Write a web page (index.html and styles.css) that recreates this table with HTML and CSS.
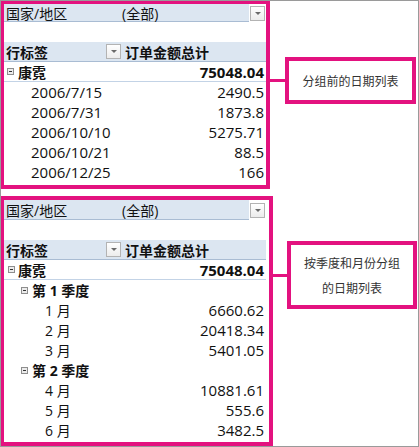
FILE: index.html
```html
<!DOCTYPE html>
<html lang="zh-CN">
<head>
<meta charset="utf-8">
<link rel="stylesheet" href="styles.css">
</head>
<body>
<div class="frame">
  <section class="group g1">
    <div class="pivot p1">
      <div class="filter"><span class="fl">国家/地区</span><span class="fv">(全部)</span><span class="btn"></span></div>
      <div class="spacer"></div>
      <div class="hdr"><span class="hl">行标签</span><span class="btn"></span><span class="hv">订单金额总计</span></div>
      <div class="row total"><span class="exp"></span><span class="lbl">康霓</span><span class="val">75048.04</span></div>
      <div class="row date"><span class="lbl">2006/7/15</span><span class="val">2490.5</span></div>
      <div class="row date"><span class="lbl">2006/7/31</span><span class="val">1873.8</span></div>
      <div class="row date"><span class="lbl">2006/10/10</span><span class="val">5275.71</span></div>
      <div class="row date"><span class="lbl">2006/10/21</span><span class="val">88.5</span></div>
      <div class="row date"><span class="lbl">2006/12/25</span><span class="val">166</span></div>
    </div>
    <div class="callout-wrap c1"><span class="link"></span><div class="callout">分组前的日期列表</div></div>
  </section>
  <section class="group g2">
    <div class="pivot p2">
      <div class="filter"><span class="fl">国家/地区</span><span class="fv">(全部)</span><span class="btn"></span></div>
      <div class="spacer"></div>
      <div class="hdr"><span class="hl">行标签</span><span class="btn"></span><span class="hv">订单金额总计</span></div>
      <div class="row total"><span class="exp"></span><span class="lbl">康霓</span><span class="val">75048.04</span></div>
      <div class="row quarter"><span class="exp"></span><span class="lbl">第 1 季度</span></div>
      <div class="row month"><span class="lbl">1 月</span><span class="val">6660.62</span></div>
      <div class="row month"><span class="lbl">2 月</span><span class="val">20418.34</span></div>
      <div class="row month"><span class="lbl">3 月</span><span class="val">5401.05</span></div>
      <div class="row quarter"><span class="exp"></span><span class="lbl">第 2 季度</span></div>
      <div class="row month"><span class="lbl">4 月</span><span class="val">10881.61</span></div>
      <div class="row month"><span class="lbl">5 月</span><span class="val">555.6</span></div>
      <div class="row month"><span class="lbl">6 月</span><span class="val">3482.5</span></div>
    </div>
    <div class="callout-wrap c2"><span class="link"></span><div class="callout">按季度和月份分组<br>的日期列表</div></div>
  </section>
</div>
</body>
</html>
```
FILE: styles.css
```css
html, body {
  margin: 0;
  padding: 0;
  background: #fff;
}
.frame {
  width: 419px;
  height: 447px;
  box-sizing: border-box;
  border: 1px solid #9a9a9a;
  font-family: "Open Sans", "Noto Sans CJK SC", sans-serif;
  font-size: 14px;
  color: #111;
  overflow: hidden;
}
.group {
  display: flex;
  align-items: flex-start;
}
.g1 {
  margin: -1px 0 7px -1px;
}
.g2 {
  margin-left: -1px;
}
.pivot {
  box-sizing: border-box;
  border: 4px solid #e3127f;
  background: #fff;
}
.p1 {
  width: 270px;
  height: 189px;
}
.p2 {
  width: 273px;
  height: 250px;
  padding-right: 3px;
}
.filter, .hdr, .row {
  display: flex;
  align-items: center;
  width: 262px;
  box-sizing: border-box;
}
.filter {
  height: 18px;
}
.p2 .filter {
  height: 20px;
}
.filter .fl,
.filter .fv {
  background: #dce6f1;
  border-bottom: 1px solid #a9bcd3;
  height: 100%;
  box-sizing: border-box;
  display: flex;
  align-items: center;
}
.filter .fl {
  width: 118px;
  flex: none;
  padding-left: 2px;
}
.filter .fv {
  flex: 1;
}
.filter .btn {
  margin: 0 1px;
}
.spacer {
  height: 20px;
}
.hdr {
  height: 20px;
  background: #dce6f1;
  border-bottom: 1px solid #a9bcd3;
  padding-left: 2px;
  font-weight: 700;
}
.hl {
  width: 100px;
  flex: none;
}
.hdr .btn {
  margin-right: 4px;
}
.btn {
  flex: none;
  position: relative;
  width: 15px;
  height: 15px;
  box-sizing: border-box;
  border: 1px solid #b3b3b3;
  background: linear-gradient(#ffffff, #ececec);
}
.btn::after {
  content: "";
  position: absolute;
  left: 4px;
  top: 5px;
  border-left: 3px solid transparent;
  border-right: 3px solid transparent;
  border-top: 3px solid #6a6a6a;
}
.row {
  height: 20px;
  padding-right: 2px;
}
.row .val {
  margin-left: auto;
  font-size: 15px;
}
.date .lbl {
  font-size: 15px;
}
.total {
  font-weight: 700;
  padding-left: 3px;
  border-bottom: 1px solid #c3d3e6;
}
.p2 .total {
  padding-left: 4px;
}
.quarter {
  font-weight: 700;
  padding-left: 17px;
}
.date {
  padding-left: 27px;
}
.month {
  padding-left: 41px;
}
.exp {
  flex: none;
  position: relative;
  width: 7px;
  height: 7px;
  box-sizing: border-box;
  border: 1px solid #8e8e8e;
  background: #ececec;
  margin-right: 4px;
}
.p2 .total .exp {
  margin-right: 3px;
}
.exp::after {
  content: "";
  position: absolute;
  left: 1px;
  top: 2px;
  width: 3px;
  height: 1px;
  background: #333;
}
.callout-wrap {
  display: flex;
  align-items: center;
}
.c1 {
  margin-top: 57px;
}
.c2 {
  margin-top: 45px;
}
.link {
  flex: none;
  height: 3px;
  background: #e3127f;
}
.c1 .link { width: 15px; }
.c2 .link { width: 14px; }
.callout {
  box-sizing: border-box;
  border: 4px solid #e3127f;
  display: flex;
  align-items: center;
  justify-content: center;
  text-align: center;
  font-family: "Noto Sans CJK SC", sans-serif;
  font-size: 12px;
  color: #333;
}
.c1 .callout {
  width: 131px;
  height: 47px;
}
.c2 .callout {
  width: 130px;
  height: 68px;
  line-height: 25px;
}
```
